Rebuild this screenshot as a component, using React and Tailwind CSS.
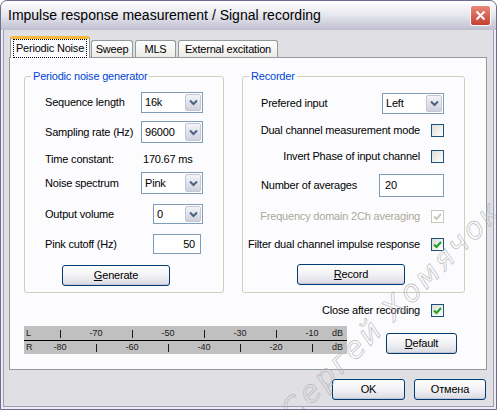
import React from "react";

const Chevron = () => (
  <svg width="9" height="7" viewBox="0 0 9 7">
    <path d="M1 1.5 L4.5 5 L8 1.5" fill="none" stroke="#4d6185" strokeWidth="2" />
  </svg>
);

// XP-style combo box
const Combo = ({ value, w, h }) => (
  <div
    className={`flex items-stretch border border-[#7f9db9] bg-white ${w} ${h}`}
  >
    <span className="flex-1 flex items-center pl-[3px] text-[11px] text-black">{value}</span>
    <div className="m-px w-[16px] flex items-center justify-center rounded-[2px] border border-[#c3c6d6] bg-gradient-to-b from-[#f4f4f8] to-[#cfd1dd]">
      <Chevron />
    </div>
  </div>
);

const Check = ({ checked, disabled }) => (
  <div
    className={`w-[13px] h-[13px] shrink-0 flex items-center justify-center border ${
      disabled ? "border-[#cac8bb] bg-white" : "border-[#1c5180] bg-gradient-to-br from-[#dcdcd7] to-white"
    }`}
  >
    {checked && (
      <svg width="9" height="9" viewBox="0 0 9 9">
        <path
          d="M1 4.5 L3.5 7 L8 2"
          fill="none"
          stroke={disabled ? "#cac8bb" : "#21a121"}
          strokeWidth="2"
        />
      </svg>
    )}
  </div>
);

const Button = ({ children, w }) => (
  <div
    className={`${w} h-[21px] flex items-center justify-center rounded-[3px] border border-[#003c74] bg-gradient-to-b from-white via-[#f2f2f5] to-[#d9d9e2] text-[11px] text-black shadow-[inset_0_-1px_0_#c5c5d3]`}
  >
    {children}
  </div>
);

const GroupBox = ({ title, className, children }) => (
  <div className={`relative rounded-[3px] border border-[#d0d0bf] ${className}`}>
    <span className="absolute -top-[8px] left-[6px] bg-[#fcfcfe] px-[2px] text-[11px] leading-[14px] text-[#0046d5]">
      {title}
    </span>
    {children}
  </div>
);

const Tick = () => <span className="inline-block w-px h-[8px] bg-[#1a1a1a]" />;

const MeterRow = ({ label, cells }) => (
  <div className="flex h-[13px] items-center text-[9px] leading-none tracking-normal text-[#1a1a1a]">
    <span className="w-[18px] pl-[2px]">{label}</span>
    {cells.map((c, i) => (
      <span key={i} className="w-[36px] flex justify-center">
        {c === "|" ? <Tick /> : c}
      </span>
    ))}
    <span className="flex-1 text-right pr-[4px]">dB</span>
  </div>
);

// label + checkbox row, label right aligned against the box
const CheckRow = ({ label, className = "", ...rest }) => (
  <div className={`h-[13px] flex items-center justify-end gap-[11px] whitespace-nowrap ${className}`}>
    <span>{label}</span>
    <Check {...rest} />
  </div>
);

export default function App() {
  return (
    <div className="relative w-[497px] h-[410px] overflow-hidden bg-[#e0dfe3] rounded-t-[7px] border border-[#6e6d8f] shadow-[inset_0_0_0_2px_#ececf2,inset_0_0_0_3px_#9c9cb4] font-['Liberation_Sans',Arial,sans-serif]">
      {/* Title bar */}
      <div className="h-[29px] flex items-center justify-between rounded-t-[6px] bg-gradient-to-b from-white via-[#e6e6ee] to-[#bfbfd0] pl-[7px] pr-[5px]">
        <span className="text-[14px] text-black">Impulse response measurement / Signal recording</span>
        <div className="w-[21px] h-[21px] flex items-center justify-center rounded-[3px] border border-white bg-gradient-to-b from-[#e8877a] to-[#c33f2f]">
          <svg width="11" height="11" viewBox="0 0 11 11">
            <path d="M1.5 1.5 L9.5 9.5 M9.5 1.5 L1.5 9.5" stroke="white" strokeWidth="2" />
          </svg>
        </div>
      </div>

      <div className="pl-[8px] pr-[10px] tracking-[-0.2px]">
        {/* Tabs */}
        <div className="mt-[5px] h-[22px] flex items-end text-[11px] text-black">
          <div className="relative z-10 mb-[-1px] ml-[1px] w-[80px] h-[22px] flex items-center justify-center rounded-t-[3px] border border-b-0 border-[#919b9c] border-t-[3px] border-t-[#f6b93a] bg-[#fcfcfe]">
            <span className="px-[2px] outline-1 outline-dotted outline-black">Periodic Noise</span>
          </div>
          <div className="ml-[1px] w-[42px] h-[17px] flex items-center justify-center rounded-t-[3px] border border-b-0 border-[#919b9c] bg-gradient-to-b from-white to-[#ecebe6]">
            Sweep
          </div>
          <div className="ml-[2px] w-[41px] h-[17px] flex items-center justify-center rounded-t-[3px] border border-b-0 border-[#919b9c] bg-gradient-to-b from-white to-[#ecebe6]">
            MLS
          </div>
          <div className="ml-[2px] w-[100px] h-[17px] flex items-center justify-center rounded-t-[3px] border border-b-0 border-[#919b9c] bg-gradient-to-b from-white to-[#ecebe6]">
            External excitation
          </div>
        </div>

        {/* Tab panel */}
        <div className="w-[478px] h-[313px] border border-[#919b9c] bg-[#fcfcfe] pl-[14px] pt-[18px] text-[11px] text-black">
          <div className="flex gap-[18px]">
            <GroupBox title="Periodic noise generator" className="w-[200px] h-[217px] pl-[20px] pr-[20px]">
              <div className="mt-[15px] h-[21px] flex items-center justify-between">
                <span>Sequence length</span>
                <Combo value="16k" w="w-[62px]" h="h-[21px]" />
              </div>
              <div className="mt-[8px] h-[22px] flex items-center justify-between">
                <span>Sampling rate (Hz)</span>
                <Combo value="96000" w="w-[62px]" h="h-[22px]" />
              </div>
              <div className="mt-[9px] h-[14px] flex items-center">
                <span className="w-[98px]">Time constant:</span>
                <span>170.67 ms</span>
              </div>
              <div className="mt-[6px] h-[22px] flex items-center justify-between">
                <span>Noise spectrum</span>
                <Combo value="Pink" w="w-[62px]" h="h-[22px]" />
              </div>
              <div className="mt-[10px] h-[20px] flex items-center justify-between">
                <span>Output volume</span>
                <Combo value="0" w="w-[50px]" h="h-[20px]" />
              </div>
              <div className="mt-[10px] h-[20px] flex items-center justify-between">
                <span>Pink cutoff (Hz)</span>
                <div className="mr-[2px] w-[48px] h-[20px] border border-[#7f9db9] bg-white flex items-center justify-end pr-[5px]">
                  50
                </div>
              </div>
              <div className="mt-[11px] flex pl-[17px]">
                <Button w="w-[108px]">
                  <span className="underline">G</span>enerate
                </Button>
              </div>
            </GroupBox>

            <GroupBox title="Recorder" className="w-[223px] h-[217px] pl-[18px] pr-[20px]">
              <div className="mt-[16px] h-[21px] flex items-center justify-between">
                <span>Prefered input</span>
                <Combo value="Left" w="w-[62px]" h="h-[21px]" />
              </div>
              <CheckRow className="mt-[10px]" label="Dual channel measurement mode" />
              <CheckRow className="mt-[13px]" label="Invert Phase of input channel" />
              <div className="mt-[11px] h-[23px] flex items-center justify-between">
                <span>Number of averages</span>
                <div className="w-[65px] h-[23px] border border-[#7f9db9] bg-white flex items-center pl-[5px]">
                  20
                </div>
              </div>
              <CheckRow className="mt-[13px] text-[#aca899]" label="Frequency domain 2Ch averaging" checked disabled />
              <CheckRow className="mt-[15px]" label="Filter dual channel impulse response" checked />
              <div className="mt-[13px] flex pl-[36px]">
                <Button w="w-[108px]">
                  <span className="underline">R</span>ecord
                </Button>
              </div>
            </GroupBox>
          </div>

          <CheckRow className="mt-[11px] pr-[42px]" label="Close after recording" checked />

          <div className="mt-[9px] flex items-start">
            <div className="w-[323px] h-[28px] bg-[#c0c0c0] pt-[1px]">
              <MeterRow label="L" cells={["|", "-70", "|", "-50", "|", "-30", "|", "-10"]} />
              <div className="h-px bg-black" />
              <MeterRow label="R" cells={["-80", "|", "-60", "|", "-40", "|", "-20", "|"]} />
            </div>
            <div className="ml-[39px] mt-[7px]">
              <Button w="w-[71px]">
                <span className="underline">D</span>efault
              </Button>
            </div>
          </div>
        </div>

        {/* Bottom buttons */}
        <div className="mt-[9px] flex justify-end gap-[9px]">
          <Button w="w-[73px]">OK</Button>
          <Button w="w-[72px]">Отмена</Button>
        </div>
      </div>

      {/* watermark */}
      <div className="pointer-events-none absolute left-[285px] top-[392px] origin-left -rotate-45 whitespace-nowrap text-[30px] italic tracking-[3px] text-transparent [-webkit-text-stroke:0.6px_#b4b4b4] font-['DejaVu_Sans',sans-serif]">
        Сергей Хомячок
      </div>
    </div>
  );
}
